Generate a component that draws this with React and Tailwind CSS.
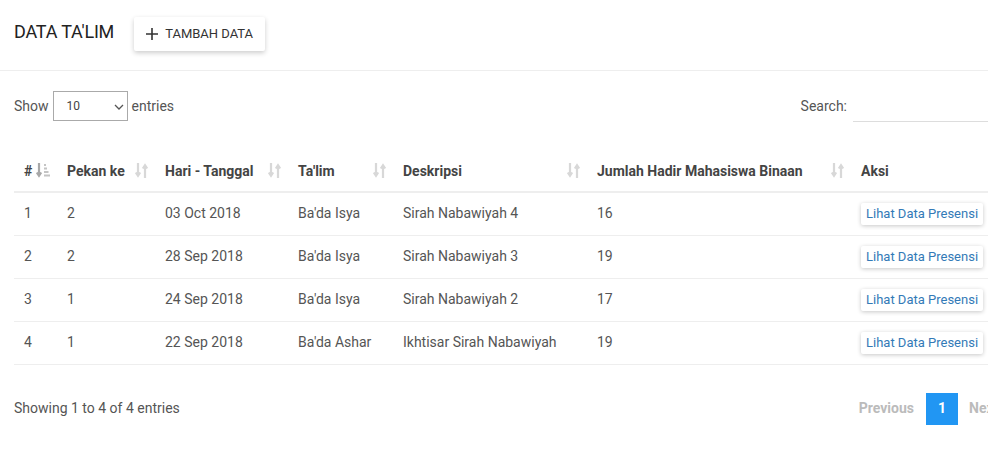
import React from 'react';

const rows = [
  { no: 1, pekan: 2, tanggal: '03 Oct 2018', talim: "Ba'da Isya", desk: 'Sirah Nabawiyah 4', hadir: 16 },
  { no: 2, pekan: 2, tanggal: '28 Sep 2018', talim: "Ba'da Isya", desk: 'Sirah Nabawiyah 3', hadir: 19 },
  { no: 3, pekan: 1, tanggal: '24 Sep 2018', talim: "Ba'da Isya", desk: 'Sirah Nabawiyah 2', hadir: 17 },
  { no: 4, pekan: 1, tanggal: '22 Sep 2018', talim: "Ba'da Ashar", desk: 'Ikhtisar Sirah Nabawiyah', hadir: 19 },
];

const SortIcon = () => (
  <svg width="13" height="17" viewBox="0 0 13 17" className="shrink-0 -mt-[2px]">
    <path d="M3 1v12M0.8 10.5l2.2 3.2 2.2-3.2" stroke="#d8d8d8" strokeWidth="2.2" fill="none" />
    <path d="M10 16V4M7.8 6.5l2.2-3.2 2.2 3.2" stroke="#d8d8d8" strokeWidth="2.2" fill="none" />
  </svg>
);

const SortAscIcon = () => (
  <svg width="14" height="17" viewBox="0 0 14 17" className="shrink-0 -mt-[2px]">
    <path d="M3 1v12M0.8 10.5l2.2 3.2 2.2-3.2" stroke="#a8a8a8" strokeWidth="2.2" fill="none" />
    <rect x="8" y="2" width="2" height="2" fill="#c4c4c4" />
    <rect x="8" y="5.5" width="3" height="2" fill="#c4c4c4" />
    <rect x="8" y="9" width="4.5" height="2" fill="#c4c4c4" />
    <rect x="8" y="12.5" width="6" height="2" fill="#c4c4c4" />
  </svg>
);

const cols = [
  { label: '#', w: 'w-[43px]', icon: <SortAscIcon /> },
  { label: 'Pekan ke', w: 'w-[98px]', icon: <SortIcon /> },
  { label: 'Hari - Tanggal', w: 'w-[133px]', icon: <SortIcon /> },
  { label: "Ta'lim", w: 'w-[105px]', icon: <SortIcon /> },
  { label: 'Deskripsi', w: 'w-[194px]', icon: <SortIcon /> },
  { label: 'Jumlah Hadir Mahasiswa Binaan', w: 'w-[264px]', icon: <SortIcon /> },
  { label: 'Aksi', w: 'w-[140px]', icon: null },
];

export default function App() {
  return (
    <div className="w-[988px] h-[449px] overflow-hidden bg-white text-[14px] text-[#555]" style={{ fontFamily: 'Roboto, "Liberation Sans", sans-serif' }}>
      <div className="w-[1010px]">
        <div className="flex items-center h-[70px] pl-[14px] border-b border-[#eeeeee] w-[974px] box-content">
          <h1 className="text-[18px] text-[#222] tracking-[-0.2px] pb-[8px]">DATA TA'LIM</h1>
          <button className="ml-[20px] mb-[3px] h-[34px] w-[131px] flex items-center justify-center gap-[7px] rounded-[2px] bg-white text-[13px] text-[#333] shadow-[0_2px_5px_rgba(0,0,0,0.2)]">
            <svg width="12" height="12" viewBox="0 0 12 12">
              <path d="M6 0v12M0 6h12" stroke="#333" strokeWidth="1.6" />
            </svg>
            TAMBAH DATA
          </button>
        </div>

        <div className="flex items-center justify-between px-[14px] mt-[20px] h-[30px]">
          <div className="flex items-center gap-[4px]">
            <span>Show</span>
            <div className="relative h-[30px] w-[75px] border border-[#aaa] flex items-center pl-[13px] text-[12px] text-[#444]">
              10
              <svg className="absolute right-[3px] top-[12px]" width="10" height="6" viewBox="0 0 10 6">
                <path d="M1 1l4 4 4-4" stroke="#555" strokeWidth="1.3" fill="none" />
              </svg>
            </div>
            <span>entries</span>
          </div>
          <div className="flex items-center gap-[6px]">
            <span>Search:</span>
            <div className="w-[143px] h-[30px] border-b border-[#ddd] mt-[2px]" />
          </div>
        </div>

        <table className="ml-[14px] mt-[30px] border-collapse text-left">
          <thead>
            <tr className="border-b-2 border-[#eeeeee]">
              {cols.map((c) => (
                <th key={c.label} className={`${c.w} h-[41px] pl-[10px] pr-[7px] font-bold text-[#444] align-middle`}>
                  <div className="flex items-center justify-between">
                    <span>{c.label}</span>
                    {c.icon}
                  </div>
                </th>
              ))}
            </tr>
          </thead>
          <tbody>
            {rows.map((r) => (
              <tr key={r.no} className="border-b border-[#eeeeee] h-[43px]">
                <td className="pl-[10px]">{r.no}</td>
                <td className="pl-[10px]">{r.pekan}</td>
                <td className="pl-[10px]">{r.tanggal}</td>
                <td className="pl-[10px]">{r.talim}</td>
                <td className="pl-[10px]">{r.desk}</td>
                <td className="pl-[10px]">{r.hadir}</td>
                <td className="pl-[10px]">
                  <button className="h-[22px] px-[5px] bg-white text-[13px] text-[#337ab7] rounded-[2px] shadow-[0_1px_4px_rgba(0,0,0,0.22)] whitespace-nowrap">
                    Lihat Data Presensi
                  </button>
                </td>
              </tr>
            ))}
          </tbody>
        </table>

        <div className="flex items-center justify-between pl-[14px] mt-[28px]">
          <span>Showing 1 to 4 of 4 entries</span>
          <div className="flex items-center font-bold text-[#bbb]">
            <span className="px-[12px]">Previous</span>
            <span className="w-[32px] h-[32px] bg-[#2196f3] text-white flex items-center justify-center">1</span>
            <span className="pl-[11px] w-[52px]">Next</span>
          </div>
        </div>
      </div>
    </div>
  );
}
